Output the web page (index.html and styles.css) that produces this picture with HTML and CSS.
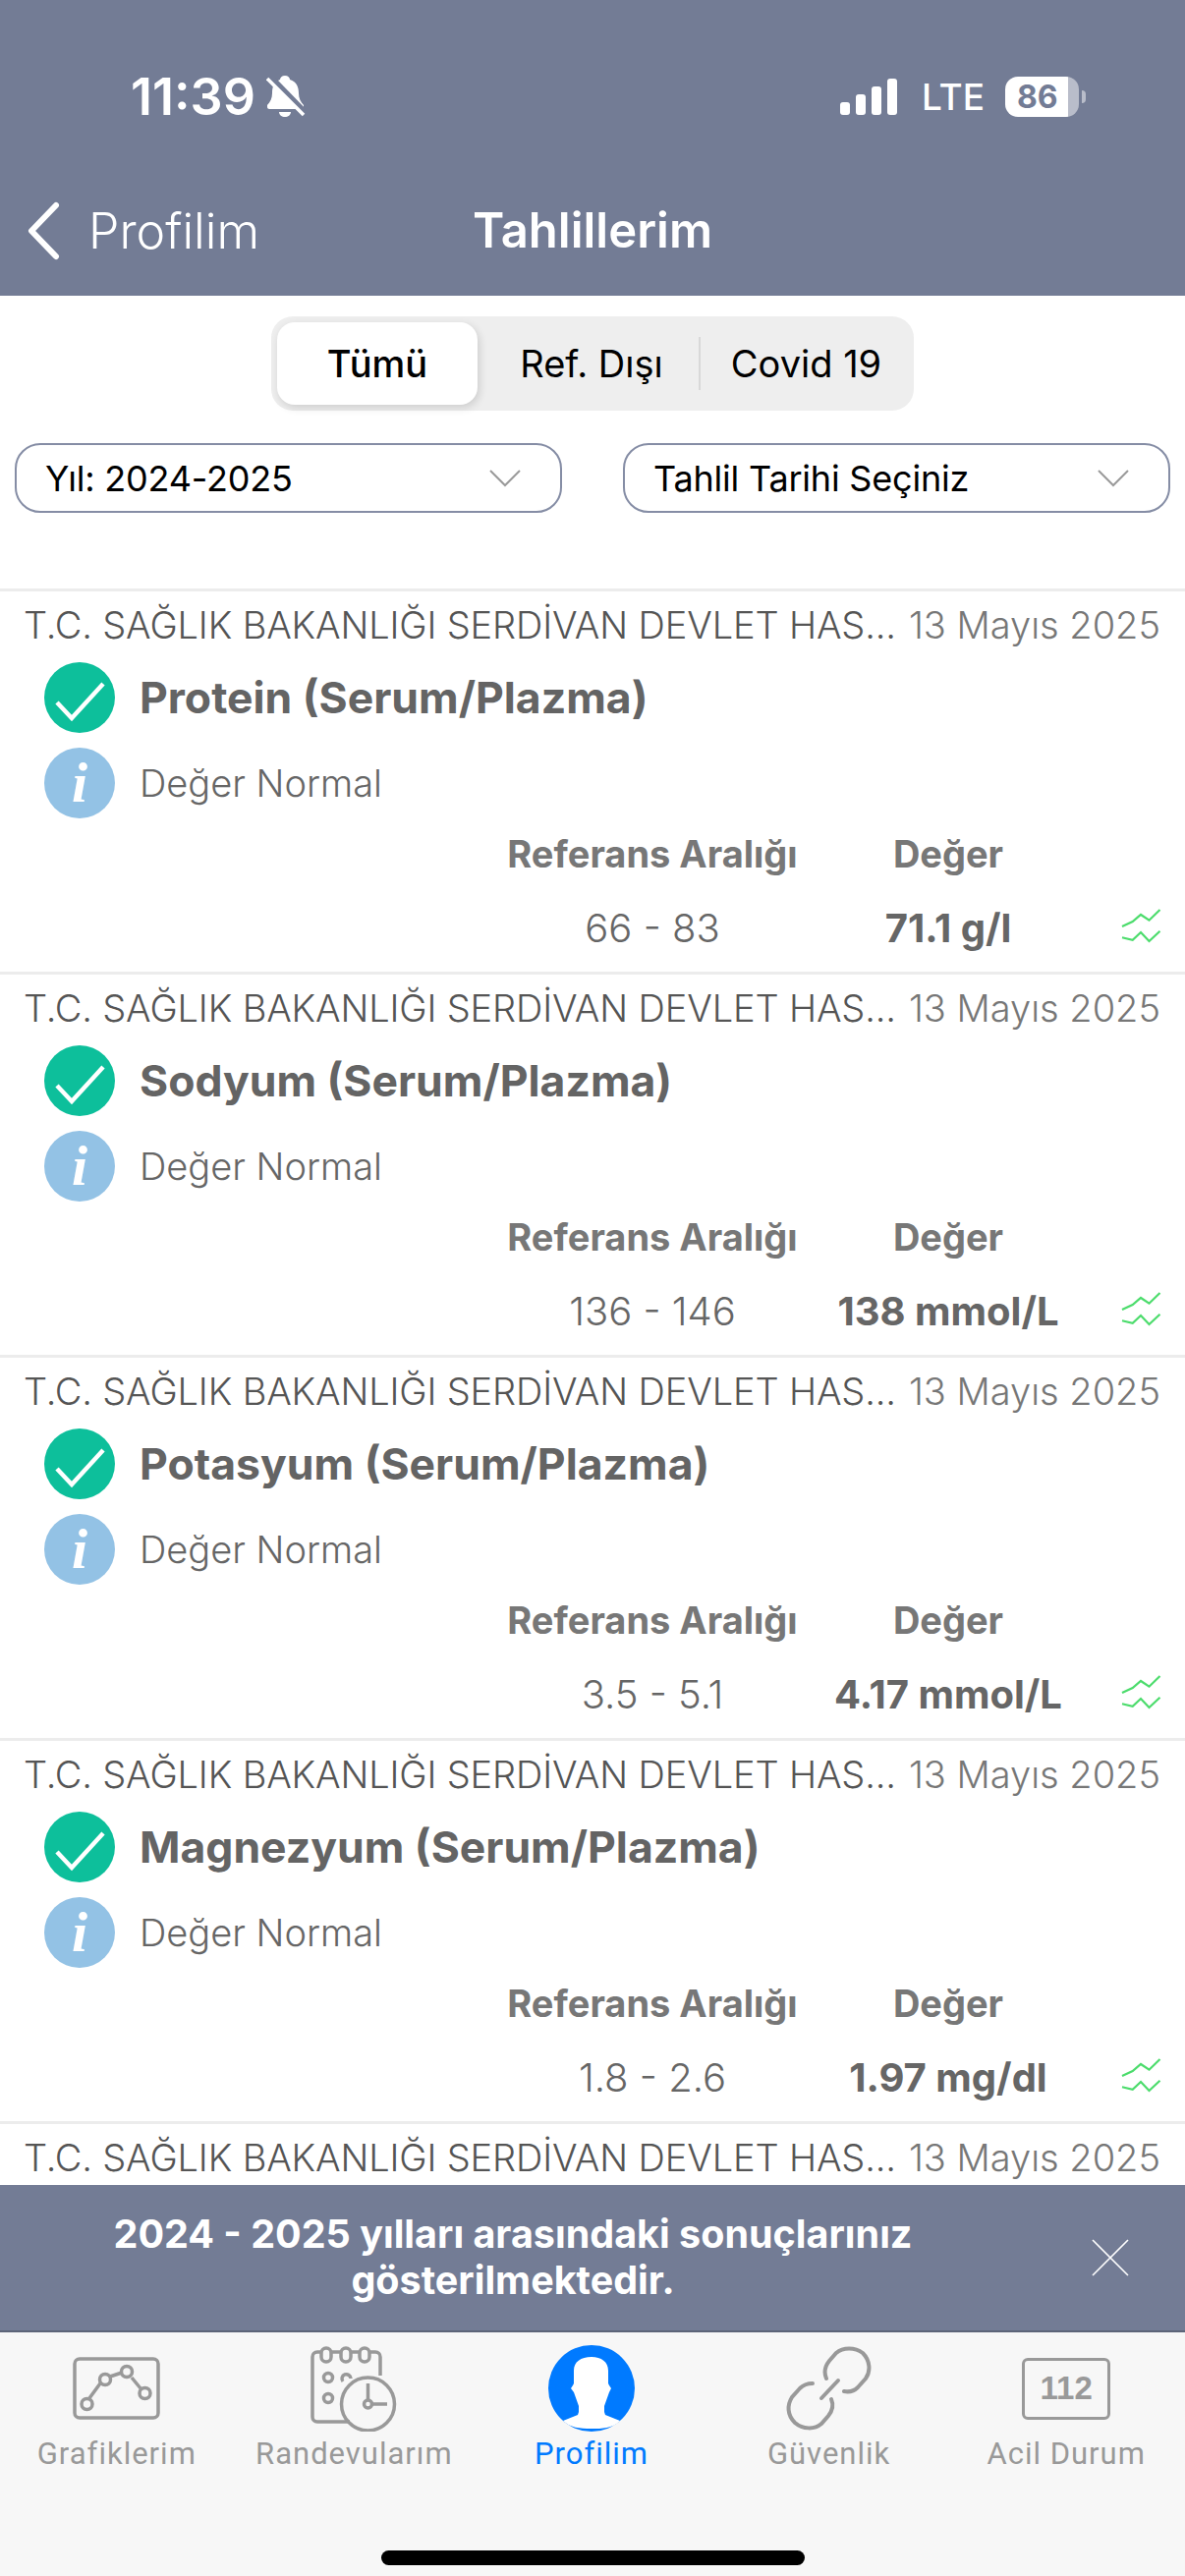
FILE: index.html
```html
<!DOCTYPE html>
<html lang="tr">
  <head>
    <meta charset="UTF-8" />
    <meta name="viewport" content="width=device-width, initial-scale=1.0" />
    <title>Tahlillerim</title>
    <link rel="stylesheet" href="styles.css">
  </head>
  <body>
    <div class="page">
      <!-- Üst bar -->
      <header class="top">
        <div class="status">
          <div class="status-left">
            <span class="time">11:39</span>
            <svg class="bell" viewBox="0 0 40 42" width="40" height="42">
              <path d="M19 0c3 0 5 2 5 4 7 2 9 8 9 14 0 5 2 9 5 12v2c0 1-1 2-2 2H3c-1 0-2-1-2-2v-2c3-3 5-7 5-12C6 11 8 6 14 4c0-2 2-4 5-4zM13 37h12c0 3-3 5-6 5s-6-2-6-5z" fill="#fff"/>
              <path d="M4 1l36 37" stroke="#737c95" stroke-width="6"/>
              <path d="M1 3l37 37" stroke="#fff" stroke-width="3.500"/>
            </svg>
          </div>
          <div class="status-right">
            <svg class="signal" viewBox="0 0 58 37" width="58" height="37">
              <rect x="0" y="24" width="10" height="13" rx="3" fill="#fff"/>
              <rect x="16" y="16" width="10" height="21" rx="3" fill="#fff"/>
              <rect x="32" y="8" width="10" height="29" rx="3" fill="#fff"/>
              <rect x="48" y="0" width="10" height="37" rx="3" fill="#fff"/>
            </svg>
            <span class="lte">LTE</span>
            <div class="battery">
              <span class="battery-num">86</span>
            </div>
            <span class="battery-nub"></span>
          </div>
        </div>
        <nav class="nav">
          <div class="back">
            <svg viewBox="0 0 36 60" width="36" height="60">
              <path d="M31 4L6 30l25 26" fill="none" stroke="#fff" stroke-width="6" stroke-linecap="round" stroke-linejoin="round"/>
            </svg>
            <span>Profilim</span>
          </div>
          <div class="nav-title">Tahlillerim</div>
          <div></div>
        </nav>
      </header>

      <!-- Filtreler -->
      <div class="filters">
        <div class="segment">
          <div class="seg-item active">Tümü</div>
          <div class="seg-item ref">Ref. Dışı</div>
          <div class="seg-line"></div>
          <div class="seg-item covid">Covid 19</div>
        </div>
        <div class="selects">
          <div class="select">
            <span>Yıl: 2024-2025</span>
            <svg viewBox="0 0 32 18" width="32" height="18"><path d="M1 1l15 15L31 1" fill="none" stroke="#9a9a9a" stroke-width="2"/></svg>
          </div>
          <div class="select">
            <span>Tahlil Tarihi Seçiniz</span>
            <svg viewBox="0 0 32 18" width="32" height="18"><path d="M1 1l15 15L31 1" fill="none" stroke="#9a9a9a" stroke-width="2"/></svg>
          </div>
        </div>
      </div>

      <!-- Tahlil listesi -->
      <main class="list">
        <section class="row">
          <div class="row-head">
            <span class="hospital">T.C. SAĞLIK BAKANLIĞI SERDİVAN DEVLET HAS...</span>
            <span class="date">13 Mayıs 2025</span>
          </div>
          <div class="line title-line">
            <svg class="check" viewBox="0 0 72 72" width="72" height="72"><circle cx="36" cy="36" r="36" fill="#0dbf9b"/><path d="M13 41l15 16L60 22" fill="none" stroke="#fff" stroke-width="4.500"/></svg>
            <span class="test-name">Protein (Serum/Plazma)</span>
          </div>
          <div class="line note-line">
            <div class="info">i</div>
            <span class="note">Değer Normal</span>
          </div>
          <div class="values">
            <span class="col-head first">Referans Aralığı</span>
            <span class="col-head">Değer</span>
            <span></span>
            <span class="range first">66 - 83</span>
            <span class="result">71.1 g/l</span>
            <svg class="trend" viewBox="0 0 41 35" width="41" height="35"><path d="M1 18l10.700-5L20 6l8.500 5.700L39.500 1M1 29.300l10.700 2.400L20 24l8.500 9 11-10.300" fill="none" stroke="#4cdc6c" stroke-width="2.200"/></svg>
          </div>
        </section>

        <section class="row">
          <div class="row-head">
            <span class="hospital">T.C. SAĞLIK BAKANLIĞI SERDİVAN DEVLET HAS...</span>
            <span class="date">13 Mayıs 2025</span>
          </div>
          <div class="line title-line">
            <svg class="check" viewBox="0 0 72 72" width="72" height="72"><circle cx="36" cy="36" r="36" fill="#0dbf9b"/><path d="M13 41l15 16L60 22" fill="none" stroke="#fff" stroke-width="4.500"/></svg>
            <span class="test-name">Sodyum (Serum/Plazma)</span>
          </div>
          <div class="line note-line">
            <div class="info">i</div>
            <span class="note">Değer Normal</span>
          </div>
          <div class="values">
            <span class="col-head first">Referans Aralığı</span>
            <span class="col-head">Değer</span>
            <span></span>
            <span class="range first">136 - 146</span>
            <span class="result">138 mmol/L</span>
            <svg class="trend" viewBox="0 0 41 35" width="41" height="35"><path d="M1 18l10.700-5L20 6l8.500 5.700L39.500 1M1 29.300l10.700 2.400L20 24l8.500 9 11-10.300" fill="none" stroke="#4cdc6c" stroke-width="2.200"/></svg>
          </div>
        </section>

        <section class="row">
          <div class="row-head">
            <span class="hospital">T.C. SAĞLIK BAKANLIĞI SERDİVAN DEVLET HAS...</span>
            <span class="date">13 Mayıs 2025</span>
          </div>
          <div class="line title-line">
            <svg class="check" viewBox="0 0 72 72" width="72" height="72"><circle cx="36" cy="36" r="36" fill="#0dbf9b"/><path d="M13 41l15 16L60 22" fill="none" stroke="#fff" stroke-width="4.500"/></svg>
            <span class="test-name">Potasyum (Serum/Plazma)</span>
          </div>
          <div class="line note-line">
            <div class="info">i</div>
            <span class="note">Değer Normal</span>
          </div>
          <div class="values">
            <span class="col-head first">Referans Aralığı</span>
            <span class="col-head">Değer</span>
            <span></span>
            <span class="range first">3.5 - 5.1</span>
            <span class="result">4.17 mmol/L</span>
            <svg class="trend" viewBox="0 0 41 35" width="41" height="35"><path d="M1 18l10.700-5L20 6l8.500 5.700L39.500 1M1 29.300l10.700 2.400L20 24l8.500 9 11-10.300" fill="none" stroke="#4cdc6c" stroke-width="2.200"/></svg>
          </div>
        </section>

        <section class="row">
          <div class="row-head">
            <span class="hospital">T.C. SAĞLIK BAKANLIĞI SERDİVAN DEVLET HAS...</span>
            <span class="date">13 Mayıs 2025</span>
          </div>
          <div class="line title-line">
            <svg class="check" viewBox="0 0 72 72" width="72" height="72"><circle cx="36" cy="36" r="36" fill="#0dbf9b"/><path d="M13 41l15 16L60 22" fill="none" stroke="#fff" stroke-width="4.500"/></svg>
            <span class="test-name">Magnezyum (Serum/Plazma)</span>
          </div>
          <div class="line note-line">
            <div class="info">i</div>
            <span class="note">Değer Normal</span>
          </div>
          <div class="values">
            <span class="col-head first">Referans Aralığı</span>
            <span class="col-head">Değer</span>
            <span></span>
            <span class="range first">1.8 - 2.6</span>
            <span class="result">1.97 mg/dl</span>
            <svg class="trend" viewBox="0 0 41 35" width="41" height="35"><path d="M1 18l10.700-5L20 6l8.500 5.700L39.500 1M1 29.300l10.700 2.400L20 24l8.500 9 11-10.300" fill="none" stroke="#4cdc6c" stroke-width="2.200"/></svg>
          </div>
        </section>

        <section class="row">
          <div class="row-head">
            <span class="hospital">T.C. SAĞLIK BAKANLIĞI SERDİVAN DEVLET HAS...</span>
            <span class="date">13 Mayıs 2025</span>
          </div>
        </section>
      </main>

      <!-- Bilgi bandı -->
      <div class="banner">
        <p>2024 - 2025 yılları arasındaki sonuçlarınız gösterilmektedir.</p>
        <svg viewBox="0 0 38 38" width="38" height="38"><path d="M1 1l36 36M37 1L1 37" stroke="#fff" stroke-width="1.600"/></svg>
      </div>

      <!-- Alt menü -->
      <footer class="tabbar">
        <div class="tabs">
          <div class="tab">
            <div class="tab-icon">
              <svg viewBox="0 0 89 64" width="89" height="64" fill="none" stroke="#999" stroke-width="3.500">
                <rect x="2" y="2" width="85" height="60" rx="5"/>
                <path d="M17 42l11-15M38 20l12-4M60 21l9 11"/>
                <circle cx="14.500" cy="48" r="5.500"/>
                <circle cx="33" cy="23" r="5.500"/>
                <circle cx="55" cy="15" r="5.500"/>
                <circle cx="73.500" cy="37" r="5.500"/>
              </svg>
            </div>
            <span class="tab-label">Grafiklerim</span>
          </div>
          <div class="tab">
            <div class="tab-icon">
              <svg viewBox="0 0 88 87" width="88" height="87" fill="none" stroke="#999" stroke-width="3.500">
                <path d="M40 77H7c-3 0-5-2-5-5V11c0-3 2-5 5-5h4M22 6h8M41 6h9M61 6h5c3 0 5 2 5 5v19"/>
                <rect x="11" y="2" width="10" height="14" rx="5"/>
                <rect x="31" y="2" width="10" height="14" rx="5"/>
                <rect x="50" y="2" width="10" height="14" rx="5"/>
                <circle cx="18" cy="32" r="4.500"/>
                <path d="M33 36a4.500 4.500 0 1 1 8-3"/>
                <circle cx="18" cy="53" r="4.500"/>
                <circle cx="58.500" cy="59" r="27"/>
                <path d="M58.500 54V38M63 59h15"/>
                <circle cx="58.500" cy="59" r="4"/>
              </svg>
            </div>
            <span class="tab-label">Randevularım</span>
          </div>
          <div class="tab active">
            <div class="tab-icon">
              <svg viewBox="0 0 88 88" width="88" height="88">
                <circle cx="44" cy="44" r="44" fill="#007aff"/>
                <path d="M44 12c10 0 17 5 17 14v13l1 2 2 3-2 4-5 14v6l1 3 15 6C65 85 55 85 44 85c-12 0-22-1-29-8l15-6 1-3v-6l-5-14-3-4 2-3 1-2V26c0-9 7-14 18-14z" fill="#fff"/>
              </svg>
            </div>
            <span class="tab-label">Profilim</span>
          </div>
          <div class="tab">
            <div class="tab-icon">
              <svg viewBox="0 0 87 86" width="87" height="86" fill="none" stroke="#999" stroke-width="4" stroke-linecap="round">
                <path d="M41 33c-3-7-1-13 3-18l7-8c7-6 19-6 27 0 8 8 8 19 3 26l-8 9c-4 4-9 5-14 4"/>
                <path d="M53 35L36 53"/>
                <path d="M46 54c3 7 1 12-3 17l-7 8c-7 6-19 6-27-1-8-8-8-18-3-26l8-9c4-4 8-5 13-5"/>
              </svg>
            </div>
            <span class="tab-label">Güvenlik</span>
          </div>
          <div class="tab">
            <div class="tab-icon">
              <div class="box-112">112</div>
            </div>
            <span class="tab-label">Acil Durum</span>
          </div>
        </div>
        <div class="home-bar"></div>
      </footer>
    </div>
  </body>
</html>
```

FILE: styles.css
```css
* {
  box-sizing: border-box;
}

body {
  margin: 0;
  font-family: Inter, "Liberation Sans", Arial, sans-serif;
  background: white;
}

.page {
  width: 1206px;
  height: 2622px;
  display: flex;
  flex-direction: column;
  overflow: hidden;
}

/* Üst bar */
.top {
  height: 301px;
  background: #737c95;
  color: white;
  flex-shrink: 0;
}

.status {
  height: 198px;
  padding: 76px 101px 0 133px;
  display: flex;
  justify-content: space-between;
  align-items: flex-start;
}

.status-left {
  display: flex;
  align-items: center;
  gap: 11px;
  height: 44px;
}

.time {
  font-size: 52px;
  font-weight: 600;
}

.status-right {
  display: flex;
  align-items: center;
  height: 44px;
}

.signal {
  margin-right: 25px;
}

.lte {
  font-size: 37px;
  font-weight: 500;
  margin-right: 21px;
}

.battery {
  width: 75px;
  height: 41px;
  border-radius: 13px;
  background: linear-gradient(90deg, white 85%, #b9bdca 85%);
  color: #737c95;
  font-size: 32px;
  font-weight: 700;
  line-height: 41px;
  padding-left: 12px;
}

.battery-nub {
  width: 4px;
  height: 13px;
  margin-left: 3px;
  background: #b9bdca;
  border-radius: 0 6px 6px 0;
}

.nav {
  height: 103px;
  display: grid;
  grid-template-columns: 1fr auto 1fr;
  align-items: center;
  padding-bottom: 30px;
}

.back {
  display: flex;
  align-items: center;
  gap: 28px;
  padding-left: 26px;
  font-size: 50px;
  font-weight: 300;
}

.nav-title {
  font-size: 49px;
  font-weight: 600;
}

/* Filtreler */
.filters {
  height: 298px;
  flex-shrink: 0;
  padding-top: 21px;
}

.segment {
  width: 654px;
  height: 96px;
  margin: 0 auto;
  background: #eeeeee;
  border-radius: 22px;
  display: flex;
  align-items: center;
  padding-left: 6px;
  font-size: 38px;
  color: black;
}

.seg-item {
  text-align: center;
}

.seg-item.active {
  width: 204px;
  height: 84px;
  line-height: 84px;
  background: white;
  border-radius: 18px;
  box-shadow: 2px 3px 8px rgba(0, 0, 0, 0.14);
  font-weight: 500;
}

.seg-item.ref {
  width: 225px;
  padding-left: 7px;
}

.seg-line {
  width: 2px;
  height: 54px;
  background: #d8d8d8;
}

.seg-item.covid {
  width: 215px;
}

.selects {
  display: flex;
  justify-content: space-between;
  padding: 0 15px;
  margin-top: 33px;
}

.select {
  width: 557px;
  height: 71px;
  border: 2px solid #858da5;
  border-radius: 26px;
  display: flex;
  align-items: center;
  justify-content: space-between;
  padding: 0 40px 0 29px;
  font-size: 36px;
  letter-spacing: -0.2px;
  color: black;
}

/* Liste */
.list {
  flex: 1;
  min-height: 0;
  overflow: hidden;
}

.row {
  height: 390px;
  border-top: 3px solid #ececec;
  flex-shrink: 0;
}

.row-head {
  height: 68px;
  display: flex;
  align-items: center;
  justify-content: space-between;
  padding: 0 25px 0 24px;
  font-size: 38px;
  font-weight: 300;
  white-space: nowrap;
}

.hospital {
  color: #555;
  letter-spacing: -0.15px;
}

.date {
  color: #777;
}

.line {
  display: flex;
  align-items: center;
  gap: 25px;
  padding-left: 45px;
}

.title-line {
  height: 72px;
  margin-top: 4px;
}

.note-line {
  height: 72px;
  margin-top: 15px;
}

.test-name {
  font-size: 44.5px;
  font-weight: 700;
  color: #646464;
}

.info {
  width: 72px;
  height: 72px;
  border-radius: 50%;
  background: #93c2e5;
  color: white;
  font-family: "Liberation Serif", serif;
  font-style: italic;
  font-weight: bold;
  font-size: 58px;
  line-height: 72px;
  text-align: center;
}

.note {
  font-size: 38px;
  font-weight: 300;
  color: #666;
}

.values {
  display: grid;
  grid-template-columns: 350px 252px 1fr;
  grid-template-rows: 69px 82px;
  padding-left: 489px;
  margin-top: 1px;
  align-items: center;
  justify-items: center;
}

.col-head {
  font-size: 38px;
  font-weight: 700;
  color: #777;
}

.range {
  font-size: 40px;
  font-weight: 300;
  color: #666;
}

.result {
  font-size: 40px;
  font-weight: 700;
  color: #666;
}

.trend {
  justify-self: start;
  margin-left: 50px;
  margin-top: -4px;
}

/* Bilgi bandı */
.banner {
  height: 150px;
  flex-shrink: 0;
  background: #737c95;
  border-bottom: 2px solid #5d6579;
  color: white;
  display: flex;
  align-items: center;
  padding-right: 57px;
  gap: 67px;
}

.banner p {
  flex: 1;
  margin: 0;
  font-size: 39.5px;
  line-height: 47px;
  font-weight: 700;
  text-align: center;
}

/* Alt menü */
.tabbar {
  height: 248px;
  flex-shrink: 0;
  background: #f7f7f7;
  padding-top: 13px;
}

.tabs {
  display: grid;
  grid-template-columns: repeat(5, 1fr);
  margin-left: -2px;
}

.tab {
  display: flex;
  flex-direction: column;
  align-items: center;
  color: #999;
}

.tab.active {
  color: #007aff;
}

.tab-icon {
  height: 88px;
  display: flex;
  align-items: center;
  justify-content: center;
}

.tab-label {
  margin-top: 3px;
  font-size: 31px;
  font-weight: 400;
  line-height: 40px;
  font-family: Roboto, Inter, sans-serif;
  letter-spacing: 1px;
}

.box-112 {
  width: 90px;
  height: 63px;
  border: 3.500px solid #999;
  border-radius: 6px;
  font-family: "Liberation Sans", Arial, sans-serif;
  font-size: 33px;
  font-weight: bold;
  line-height: 56px;
  text-align: center;
}

.home-bar {
  width: 431px;
  height: 15px;
  margin: 78px auto 0;
  background: black;
  border-radius: 8px;
}
```
